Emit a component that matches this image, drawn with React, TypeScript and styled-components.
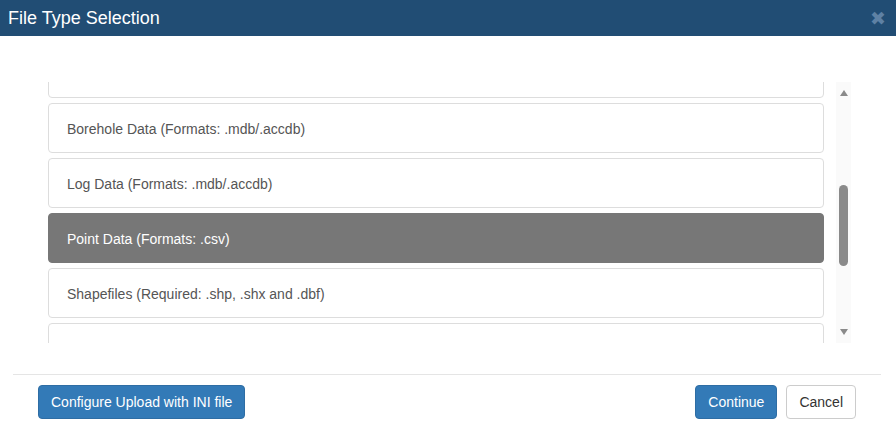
import React, { useEffect, useRef, useState } from 'react'
import styled, { createGlobalStyle } from 'styled-components'

const GlobalStyle = createGlobalStyle`
  html, body {
    margin: 0;
    padding: 0;
    background: #fff;
    font-family: 'Liberation Sans', Arial, sans-serif;
    font-size: 14px;
    color: #333;
  }
`

const Modal = styled.div`
  width: 896px;
  height: 436px;
  display: flex;
  flex-direction: column;
  background: #fff;
  overflow: hidden;
`

const Header = styled.div`
  height: 36px;
  flex: none;
  display: flex;
  align-items: center;
  justify-content: space-between;
  padding: 0 8px;
  background: #214d74;
`

const Title = styled.h4`
  margin: 0;
  font-size: 18px;
  font-weight: normal;
  color: #fff;
  line-height: 1;
`

const Close = styled.button`
  border: 0;
  background: none;
  padding: 0;
  margin-right: 2px;
  font-family: 'DejaVu Sans', sans-serif;
  font-size: 19px;
  font-weight: bold;
  line-height: 1;
  color: #5e81a4;
  cursor: pointer;
`

const Body = styled.div`
  padding: 46px 45px 0 48px;
  display: flex;
`

const ScrollList = styled.div`
  flex: 1;
  height: 261px;
  overflow-y: scroll;
  padding-right: 12px;
  scrollbar-width: none;

  &::-webkit-scrollbar {
    display: none;
  }
`

const ListInner = styled.div`
  padding: 28px 0 0;
`

const Item = styled.div<{ $active?: boolean }>`
  height: 50px;
  box-sizing: border-box;
  margin-bottom: 5px;
  padding: 15px 18px 13px;
  line-height: 20px;
  border: 1px solid ${(p) => (p.$active ? '#777' : '#ddd')};
  border-radius: 4px;
  background: ${(p) => (p.$active ? '#777' : '#fff')};
  color: ${(p) => (p.$active ? '#fff' : '#555')};
  cursor: pointer;
`

const ScrollBar = styled.div`
  width: 15px;
  height: 261px;
  flex: none;
  display: flex;
  flex-direction: column;
  background: #fafafa;
`

const Arrow = styled.div<{ $down?: boolean }>`
  height: 15px;
  flex: none;
  box-sizing: border-box;
  display: flex;
  justify-content: center;
  align-items: ${(p) => (p.$down ? 'flex-start' : 'flex-end')};
  padding: ${(p) => (p.$down ? '1px 0 0' : '0 0 1px')};

  &::before {
    content: '';
    border-left: 4.5px solid transparent;
    border-right: 4.5px solid transparent;
    ${(p) =>
      p.$down ? 'border-top: 6px solid #8a8a8a;' : 'border-bottom: 6px solid #8a8a8a;'}
  }
`

const Track = styled.div`
  flex: 1;
  position: relative;
`

const Thumb = styled.div`
  position: absolute;
  left: 3px;
  right: 3px;
  border-radius: 5px;
  background: #8a8a8a;
`

const Footer = styled.div`
  margin: 31px 15px 0 13px;
  border-top: 1px solid #e5e5e5;
  padding: 10px 25px;
  display: flex;
  align-items: center;
`

const Spacer = styled.div`
  flex: 1;
`

const Button = styled.button<{ $variant?: 'primary' | 'default' }>`
  font-family: 'Liberation Sans', Arial, sans-serif;
  font-size: 14px;
  line-height: 20px;
  padding: 6px 12px;
  border-radius: 4px;
  border: 1px solid ${(p) => (p.$variant === 'primary' ? '#2e6da4' : '#ccc')};
  background: ${(p) => (p.$variant === 'primary' ? '#337ab7' : '#fff')};
  color: ${(p) => (p.$variant === 'primary' ? '#fff' : '#333')};
  cursor: pointer;

  & + & {
    margin-left: 9px;
  }
`

const fileTypes = [
  'Project Data (Formats: .gpj)',
  'Geology Data (Formats: .xlsx)',
  'Lithology Data (Formats: .csv)',
  'Sample Data (Formats: .csv/.xlsx)',
  'Survey Data (Formats: .xlsx/.csv)',
  'Borehole Data (Formats: .mdb/.accdb)',
  'Log Data (Formats: .mdb/.accdb)',
  'Point Data (Formats: .csv)',
  'Shapefiles (Required: .shp, .shx and .dbf)',
  'Raster Data (Formats: .tif/.asc)',
  'CAD Data (Formats: .dxf/.dwg)',
  'Well Data (Formats: .las)',
  'Other Data',
]

const TRACK = 231

const App: React.FC = () => {
  const [selected, setSelected] = useState(7)
  const [thumb, setThumb] = useState({ top: 91, height: 84 })
  const listRef = useRef<HTMLDivElement>(null)

  const updateThumb = () => {
    const el = listRef.current
    if (!el) return
    const height = Math.max(20, (TRACK * el.clientHeight) / el.scrollHeight)
    const range = el.scrollHeight - el.clientHeight
    const top = range > 0 ? (el.scrollTop / range) * (TRACK - height) : 0
    setThumb({ top, height })
  }

  useEffect(() => {
    if (listRef.current) listRef.current.scrollTop = 282
    updateThumb()
  }, [])

  return (
    <>
      <GlobalStyle />
      <Modal>
        <Header>
          <Title>File Type Selection</Title>
          <Close>✖</Close>
        </Header>
        <Body>
          <ScrollList ref={listRef} onScroll={updateThumb}>
            <ListInner>
              {fileTypes.map((name, i) => (
                <Item key={name} $active={i === selected} onClick={() => setSelected(i)}>
                  {name}
                </Item>
              ))}
            </ListInner>
          </ScrollList>
          <ScrollBar>
            <Arrow />
            <Track>
              <Thumb style={{ top: thumb.top, height: thumb.height }} />
            </Track>
            <Arrow $down />
          </ScrollBar>
        </Body>
        <Footer>
          <Button $variant="primary">Configure Upload with INI file</Button>
          <Spacer />
          <Button $variant="primary">Continue</Button>
          <Button>Cancel</Button>
        </Footer>
      </Modal>
    </>
  )
}

export default App
